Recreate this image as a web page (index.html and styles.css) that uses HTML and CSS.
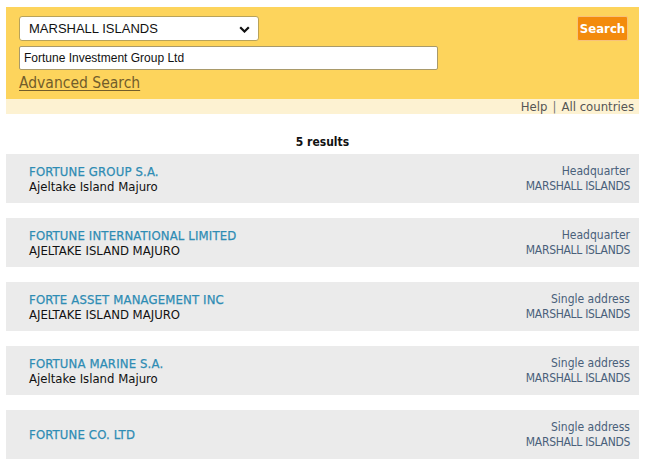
FILE: index.html
```html
<!DOCTYPE html>
<html>
<head>
<meta charset="utf-8">
<link rel="stylesheet" href="styles.css">
</head>
<body>
<div class="page">
  <div class="search">
    <div class="fields">
      <div class="select">
        <span>MARSHALL ISLANDS</span>
        <svg class="chev" width="11" height="7" viewBox="0 0 11 7"><path d="M1.2 1.2 L5.5 5.5 L9.8 1.2" fill="none" stroke="#111" stroke-width="2.2"/></svg>
      </div>
      <div class="input">Fortune Investment Group Ltd</div>
      <a class="adv" href="#">Advanced Search</a>
    </div>
    <button class="btn">Search</button>
  </div>
  <div class="strip"><span>Help</span><span class="sep">|</span><span>All countries</span></div>
  <div class="count">5 results</div>
  <div class="results">
    <div class="card">
      <div class="left"><div class="name">FORTUNE GROUP S.A.</div><div class="addr">Ajeltake Island Majuro</div></div>
      <div class="right"><div class="type">Headquarter</div><div class="country">MARSHALL ISLANDS</div></div>
    </div>
    <div class="card">
      <div class="left"><div class="name">FORTUNE INTERNATIONAL LIMITED</div><div class="addr">AJELTAKE ISLAND MAJURO</div></div>
      <div class="right"><div class="type">Headquarter</div><div class="country">MARSHALL ISLANDS</div></div>
    </div>
    <div class="card">
      <div class="left"><div class="name">FORTE ASSET MANAGEMENT INC</div><div class="addr">AJELTAKE ISLAND MAJURO</div></div>
      <div class="right"><div class="type">Single address</div><div class="country">MARSHALL ISLANDS</div></div>
    </div>
    <div class="card">
      <div class="left"><div class="name">FORTUNA MARINE S.A.</div><div class="addr">Ajeltake Island Majuro</div></div>
      <div class="right"><div class="type">Single address</div><div class="country">MARSHALL ISLANDS</div></div>
    </div>
    <div class="card">
      <div class="left"><div class="name">FORTUNE CO. LTD</div></div>
      <div class="right"><div class="type">Single address</div><div class="country">MARSHALL ISLANDS</div></div>
    </div>
  </div>
</div>
</body>
</html>
```
FILE: styles.css
```css
* { box-sizing: border-box; }
html, body { margin: 0; padding: 0; background: #fff; }
body { font-family: "DejaVu Sans Condensed", "DejaVu Sans", sans-serif; color: #111; }
.page { padding: 7px 14px 0 6px; }
.search {
  background: #fdd45c;
  height: 92px;
  display: flex;
  justify-content: space-between;
  align-items: flex-start;
  padding: 9px 11px 0 13px;
}
.fields { display: flex; flex-direction: column; }
.select {
  width: 240px; height: 25px;
  background: #fff;
  border: 1px solid #b9a35a;
  border-radius: 3px;
  display: flex; align-items: center; justify-content: space-between;
  padding: 0 8px 0 9px;
  font-family: "Liberation Sans", Arial, sans-serif; font-size: 13px; color: #111;
}
.chev { margin-top: 1px; }
.input {
  margin-top: 5px;
  width: 419px; height: 24px;
  background: #fff;
  border: 1px solid #a99a6a;
  border-radius: 2px;
  padding: 0 4px;
  display: flex; align-items: center;
  font-family: "Liberation Sans", Arial, sans-serif; font-size: 12px; color: #111;
}
.adv {
  margin-top: 4px;
  font-size: 15.5px; line-height: 19px;
  color: #725d2b;
  text-decoration: underline;
  text-underline-offset: 2px;
}
.btn {
  background: #f38b0c;
  color: #fff;
  font-family: "DejaVu Sans Condensed", "DejaVu Sans", sans-serif;
  font-weight: bold; font-size: 13px;
  border: 1px solid #f8c27a;
  border-radius: 2px;
  width: 51px; height: 25px;
  padding: 0;
}
.strip {
  background: #fdf2d2;
  height: 15px;
  display: flex; justify-content: flex-end; align-items: center; gap: 5px;
  padding-right: 5px;
  font-size: 13px; color: #555;
}
.sep { color: #777; }
.count {
  text-align: center;
  font-weight: bold; font-size: 12px;
  padding-top: 20px;
  height: 40px;
  line-height: 16px;
  color: #111;
}
.results { display: flex; flex-direction: column; gap: 15px; }
.card {
  background: #ebebeb;
  height: 49px;
  display: flex; justify-content: space-between; align-items: center;
  padding: 0 9px 0 23px;
  font-size: 13px; line-height: 15px;
}
.name { color: #2e8cb4; font-size: 13px; letter-spacing: 0.15px; line-height: 15px; -webkit-text-stroke: 0.25px #2e8cb4; }
.addr { color: #111; }
.right { text-align: right; color: #49607a; font-size: 12px; }
.country { letter-spacing: -0.3px; }
```
